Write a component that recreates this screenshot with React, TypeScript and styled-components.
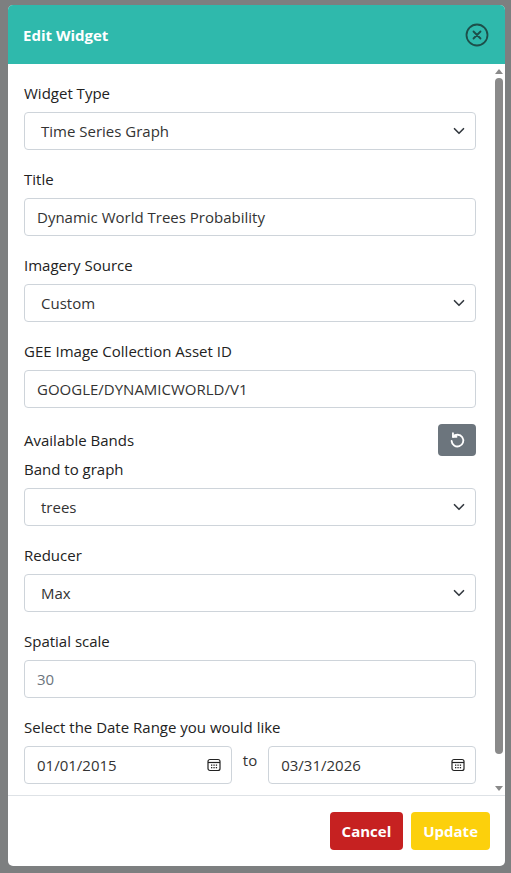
import React from 'react';
import styled, { createGlobalStyle } from 'styled-components';

const Global = createGlobalStyle`
  html, body { margin: 0; height: 100%; }
  body { background: #7d7f80; font-family: "Open Sans", "Noto Sans", sans-serif; }
`;

const Page = styled.div`
  padding: 5px 6px 7px 8px;
  height: 873px;
  box-sizing: border-box;
`;

const Modal = styled.div`
  background: #fff;
  border-radius: 5px;
  overflow: hidden;
  height: 861px;
  display: flex;
  flex-direction: column;
`;

const Header = styled.div`
  background: #2fb9ac;
  height: 59px;
  flex-shrink: 0;
  display: flex;
  align-items: center;
  justify-content: space-between;
  padding: 0 16px 0 15px;
`;

const Title = styled.h1`
  margin: 0;
  color: #fff;
  font-size: 15px;
  font-weight: 700;
`;

const Close = styled.button`
  border: none;
  background: none;
  padding: 0;
  display: flex;
  color: #1d4f4a;
`;

const BodyWrap = styled.div`
  flex: 1;
  min-height: 0;
  display: flex;
`;

const Body = styled.div`
  flex: 1;
  overflow: hidden;
  padding: 18px 17px 0 16px;
`;

const ScrollTrack = styled.div`
  width: 12px;
  display: flex;
  flex-direction: column;
  align-items: center;
  padding: 5px 0 4px;
  gap: 4px;
`;

const ScrollThumb = styled.div`
  flex: 1;
  width: 8px;
  border-radius: 4px;
  background: #8a8a8a;
  margin-bottom: 28px;
`;

const Arrow = styled.div<{ $up?: boolean }>`
  width: 0;
  height: 0;
  border-left: 4px solid transparent;
  border-right: 4px solid transparent;
  ${p => (p.$up ? 'border-bottom: 5px solid #8a8a8a;' : 'border-top: 5px solid #8a8a8a;')}
`;

const Group = styled.div`
  margin-bottom: 18px;
`;

const Label = styled.div`
  font-size: 15px;
  color: #222;
  line-height: 22px;
  margin-bottom: 8px;
`;

const Field = styled.div<{ $muted?: boolean; $select?: boolean }>`
  height: 38px;
  box-sizing: border-box;
  border: 1px solid #ced4da;
  border-radius: 4px;
  display: flex;
  align-items: center;
  justify-content: space-between;
  padding: 0 10px 0 ${p => (p.$select ? '16px' : '12px')};
  font-size: 15px;
  color: ${p => (p.$muted ? '#6c757d' : '#333')};
`;

const Row = styled.div`
  display: flex;
  align-items: center;
  justify-content: space-between;
  margin-bottom: 2px;
  margin-top: -2px;
`;

const Refresh = styled.button`
  width: 38px;
  height: 32px;
  border: none;
  border-radius: 4px;
  background: #6c757d;
  display: flex;
  align-items: center;
  justify-content: center;
`;

const DateRow = styled.div`
  display: flex;
  align-items: flex-start;
  gap: 8px;
`;

const DateField = styled(Field)`
  flex: 1;
`;

const To = styled.span`
  font-size: 15px;
  color: #333;
  margin-top: 4px;
  padding: 0 3px;
`;

const Footer = styled.div`
  flex-shrink: 0;
  border-top: 1px solid #dee2e6;
  height: 70px;
  display: flex;
  align-items: center;
  justify-content: flex-end;
  gap: 8px;
  padding: 0 15px 0 0;
`;

const Btn = styled.button<{ $bg: string }>`
  height: 38px;
  padding: 0 12px;
  border: none;
  border-radius: 4px;
  background: ${p => p.$bg};
  color: #fff;
  font-family: inherit;
  font-weight: 700;
  font-size: 15px;
  white-space: nowrap;
`;

const Chevron = () => (
  <svg width="12" height="12" viewBox="0 0 16 16" fill="none" stroke="#343a40" strokeWidth="2.2" strokeLinecap="round" strokeLinejoin="round">
    <path d="M2 5l6 6 6-6" />
  </svg>
);

const Calendar = () => (
  <svg width="14" height="14" viewBox="0 0 14 14" fill="none" stroke="#222" strokeWidth="1.2">
    <rect x="1" y="1.5" width="12" height="11" rx="2" />
    <path d="M1 4.5h12" />
    <g fill="#222" stroke="none">
      <rect x="4" y="6.5" width="1.3" height="1.3" />
      <rect x="6.4" y="6.5" width="1.3" height="1.3" />
      <rect x="8.8" y="6.5" width="1.3" height="1.3" />
      <rect x="4" y="9" width="1.3" height="1.3" />
      <rect x="6.4" y="9" width="1.3" height="1.3" />
      <rect x="8.8" y="9" width="1.3" height="1.3" />
    </g>
  </svg>
);

const Select = ({ label, value }: { label: string; value: string }) => (
  <Group>
    <Label>{label}</Label>
    <Field $select>
      <span>{value}</span>
      <Chevron />
    </Field>
  </Group>
);

const Input = ({ label, value, muted }: { label: string; value: string; muted?: boolean }) => (
  <Group>
    <Label>{label}</Label>
    <Field $muted={muted}>{value}</Field>
  </Group>
);

export default function App() {
  return (
    <Page>
      <Global />
      <Modal>
        <Header>
          <Title>Edit Widget</Title>
          <Close>
            <svg width="24" height="24" viewBox="0 0 24 24" fill="none" stroke="currentColor" strokeWidth="1.8" strokeLinecap="round">
              <circle cx="12" cy="12" r="10.5" />
              <path d="M8.5 8.5l7 7M15.5 8.5l-7 7" />
            </svg>
          </Close>
        </Header>
        <BodyWrap>
          <Body>
            <Select label="Widget Type" value="Time Series Graph" />
            <Input label="Title" value="Dynamic World Trees Probability" />
            <Select label="Imagery Source" value="Custom" />
            <Input label="GEE Image Collection Asset ID" value="GOOGLE/DYNAMICWORLD/V1" />
            <Row>
              <Label style={{ marginBottom: 0 }}>Available Bands</Label>
              <Refresh>
                <svg width="18" height="18" viewBox="0 0 20 20" fill="none" stroke="#fff" strokeWidth="2" strokeLinecap="round">
                  <path d="M5.5 6.5A6.5 6.5 0 1 1 4 11" />
                  <path d="M5.5 2.5v4h4" strokeLinejoin="round" />
                </svg>
              </Refresh>
            </Row>
            <Select label="Band to graph" value="trees" />
            <Select label="Reducer" value="Max" />
            <Input label="Spatial scale" value="30" muted />
            <Label>Select the Date Range you would like</Label>
            <DateRow>
              <DateField>
                <span>01/01/2015</span>
                <Calendar />
              </DateField>
              <To>to</To>
              <DateField>
                <span>03/31/2026</span>
                <Calendar />
              </DateField>
            </DateRow>
          </Body>
          <ScrollTrack>
            <Arrow $up />
            <ScrollThumb />
            <Arrow />
          </ScrollTrack>
        </BodyWrap>
        <Footer>
          <Btn $bg="#c62121">Cancel</Btn>
          <Btn $bg="#fcd00c">Update</Btn>
        </Footer>
      </Modal>
    </Page>
  );
}
